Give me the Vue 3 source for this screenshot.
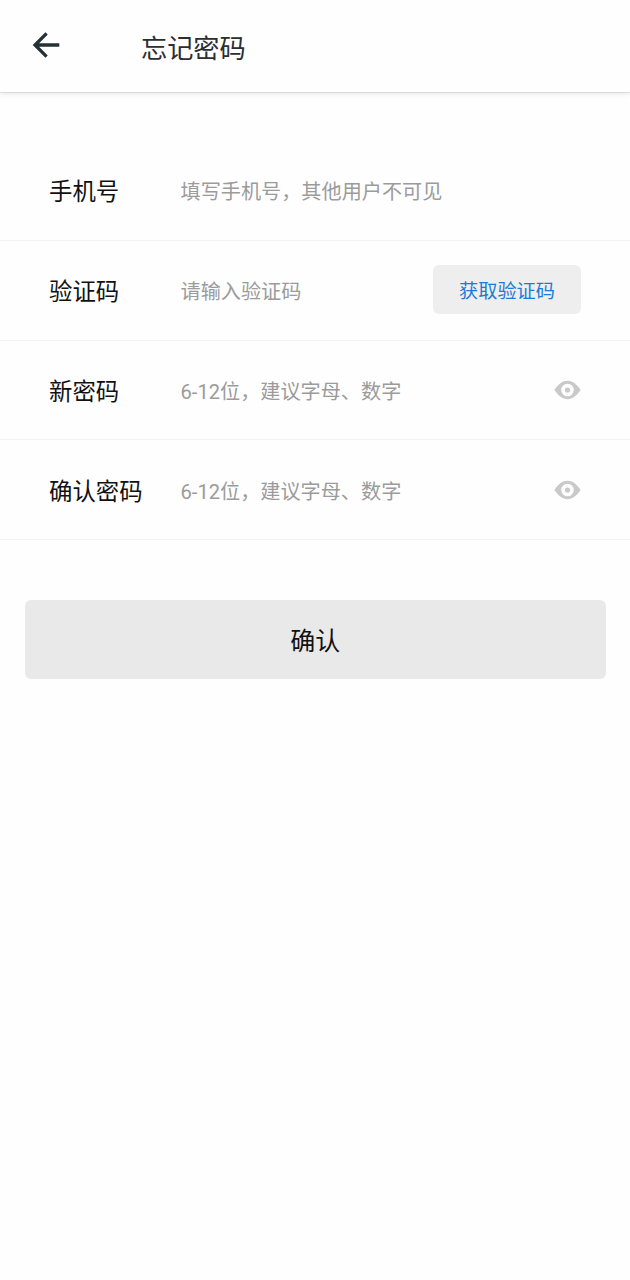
<script setup>
const rows = [
  { label: '手机号', hint: '填写手机号，其他用户不可见' },
  { label: '验证码', hint: '请输入验证码', action: '获取验证码' },
  { label: '新密码', hint: '6-12位，建议字母、数字', eye: true },
  { label: '确认密码', hint: '6-12位，建议字母、数字', eye: true },
]
</script>

<template>
  <div class="page">
    <header class="bar">
      <svg class="back" viewBox="0 0 28 28" aria-label="返回">
        <path d="M14.600 2.300 3 14l11.600 11.700M3 14H27.300" />
      </svg>
      <h1 class="title">忘记密码</h1>
    </header>

    <main class="form">
      <div v-for="row in rows" :key="row.label" class="row">
        <span class="label">{{ row.label }}</span>
        <span class="hint">{{ row.hint }}</span>
        <button v-if="row.action" class="code" type="button">{{ row.action }}</button>
        <svg v-if="row.eye" class="eye" viewBox="0 0 27 20">
          <path
            fill-rule="evenodd"
            d="M13.5 .8C8.500 .8 4.500 4 .4 10c4.100 6 8.100 9.200 13.100 9.200S22.500 16 26.600 10C22.500 4 18.500 .8 13.500 .8ZM13.500 3.700a6.300 6.300 0 1 1 0 12.600a6.300 6.300 0 1 1 0-12.600Z"
          />
          <circle cx="13.5" cy="10" r="2.6" />
        </svg>
      </div>
    </main>

    <button class="submit" type="button">确认</button>
  </div>
</template>

<style>
body {
  background: #fefefe;
}
</style>

<style scoped>
.page {
  display: flex;
  flex-direction: column;
  height: 1280px;
  background: #fefefe;
  font-family: Roboto, "Noto Sans CJK SC", sans-serif;
}
.bar {
  display: flex;
  align-items: center;
  height: 92px;
  padding-left: 32px;
  box-sizing: border-box;
  background: #fefefe;
  box-shadow: 0 1px 1px rgba(0, 0, 0, 0.09), 0 2px 6px rgba(0, 0, 0, 0.08);
}
.back {
  width: 28px;
  height: 28px;
  margin-top: -2px;
  fill: none;
  stroke: #263037;
  stroke-width: 3.3;
}
.title {
  margin: 5px 0 0 81px;
  font-size: 26.2px;
  line-height: 36px;
  font-weight: 400;
  color: #2b2d30;
}
.form {
  padding-top: 49px;
}
.row {
  display: flex;
  align-items: center;
  height: 99.75px;
  padding: 0 49px;
  box-sizing: border-box;
  border-bottom: 1px solid #f2f2f2;
}
.label {
  width: 131.5px;
  flex: none;
  padding-top: 4px;
  font-size: 23.4px;
  line-height: 34px;
  color: #111;
}
.hint {
  flex: 1;
  padding-top: 4px;
  font-size: 20.15px;
  line-height: 30px;
  color: #9b9b9b;
}
.code {
  width: 148px;
  height: 49px;
  margin-bottom: 2px;
  padding: 2px 0 0;
  border: 0;
  border-radius: 6px;
  background: #eee;
  color: #1a7bd8;
  font: inherit;
  font-size: 19.2px;
}
.eye {
  width: 27px;
  height: 20px;
  fill: #c9c9c9;
}
.submit {
  height: 79px;
  margin: 60px 24px 0 24.5px;
  padding: 0 0 2px;
  border: 0;
  border-radius: 6px;
  background: #e9e9e9;
  color: #111;
  font: inherit;
  font-size: 25px;
}
</style>
